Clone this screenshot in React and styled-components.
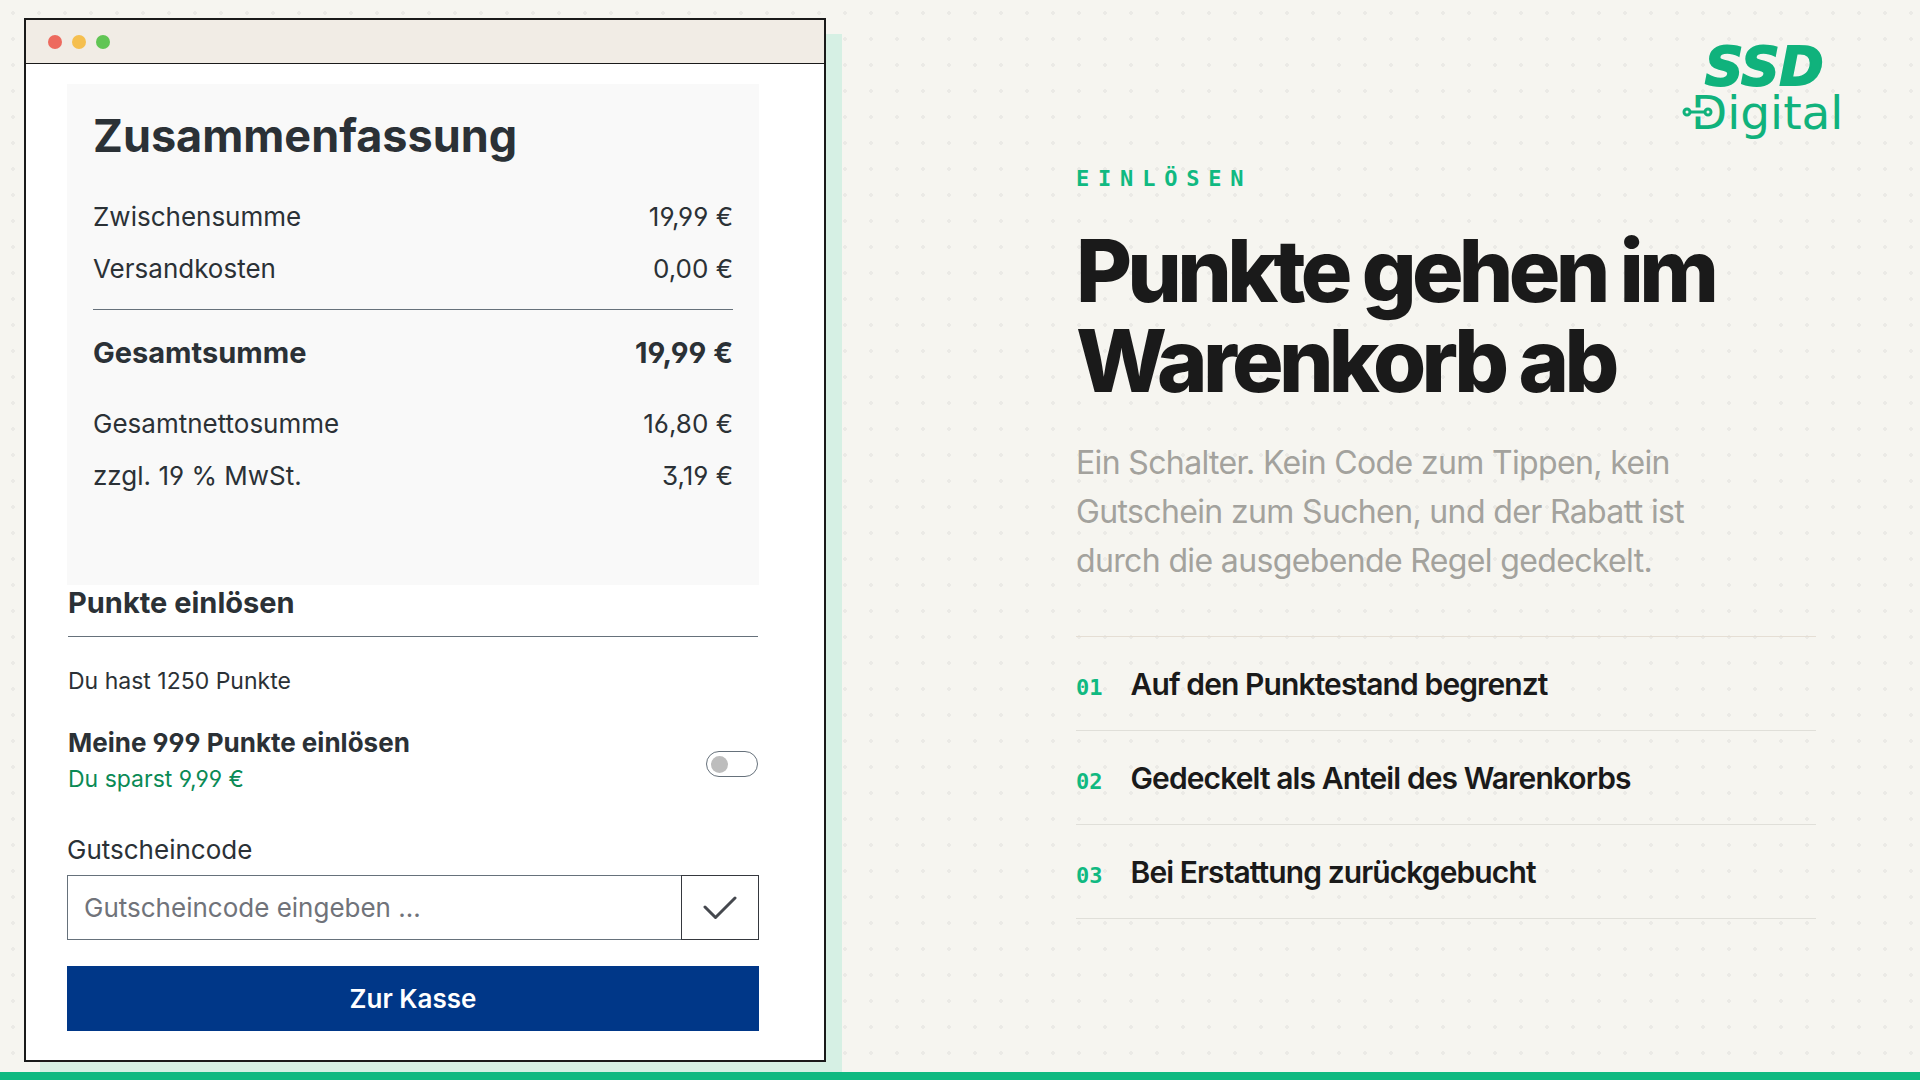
import React, { useState } from 'react';
import styled, { createGlobalStyle } from 'styled-components';


/*CSS*/

const GlobalStyle = createGlobalStyle`
    *, *::before, *::after {
        box-sizing: border-box;
    }

    body {
        margin: 0;
        background-color: #f6f5f0;
        font-family: Inter, "Liberation Sans", sans-serif;
        color: #1a1a1a;
    }

    h1, h2, h3, p, dl, dd, ol {
        margin: 0;
        padding: 0;
    }

    button, input {
        font-family: inherit;
    }
`;

const Page = styled.div`
    min-height: 100vh;
    display: flex;
    flex-direction: column;
    background-image: radial-gradient(circle at 13px 13px, #ebeae6 2px, transparent 2px);
    background-size: 26px 26px;
`;

const Slide = styled.main`
    flex: 1;
    display: grid;
    grid-template-columns: minmax(0, 802fr) minmax(0, 768fr);
    column-gap: 250px;
    align-items: start;
    padding: 18px 76px 10px 24px;
`;

const BottomBar = styled.div`
    position: relative;
    height: 8px;
    background-color: #10b981;
`;

/* Browser window */

const Window = styled.section`
    border: 2px solid #1a1a1a;
    background-color: #fff;
    box-shadow: 16px 16px 0 #d6f0e4;
    color: #2b3136;
    font-feature-settings: "ss01";
`;

const TitleBar = styled.div`
    display: flex;
    align-items: center;
    gap: 10px;
    height: 44px;
    padding: 0 22px;
    border-bottom: 1px solid #1a1a1a;
    background-color: #f1ece5;
`;

const Light = styled.span`
    width: 14px;
    height: 14px;
    border-radius: 50%;
    background-color: ${props => props.$color};
`;

const WindowBody = styled.div`
    display: flex;
    flex-direction: column;
    padding: 20px 65px 29px 41px;
`;

const Summary = styled.div`
    padding: 24px 26px 83px;
    background-color: #f9f9f9;
`;

const SummaryTitle = styled.h2`
    margin-bottom: 27px;
    font-size: 45px;
    line-height: 56px;
    font-weight: 700;
`;

const PriceList = styled.dl`
    display: flex;
    flex-direction: column;
`;

const PriceRow = styled.div`
    display: flex;
    justify-content: space-between;
    font-size: ${props => (props.$total ? "29px" : "26px")};
    font-weight: ${props => (props.$total ? "700" : "400")};
    line-height: 52px;
    white-space: nowrap;
`;

const TotalBlock = styled.div`
    margin: 14px 0 19px;
    padding-top: 17px;
    border-top: 1px solid #66717b;
`;

const Rewards = styled.div`
    padding: 0 1px;
`;

const RewardsTitle = styled.h3`
    padding-bottom: 15px;
    border-bottom: 1px solid #66717b;
    font-size: 29px;
    line-height: 36px;
    font-weight: 700;
`;

const Balance = styled.p`
    margin: 29px 0;
    font-size: 23px;
    line-height: 30px;
`;

const RedeemRow = styled.label`
    display: flex;
    justify-content: space-between;
    align-items: flex-end;
    cursor: pointer;
`;

const RedeemText = styled.span`
    display: flex;
    flex-direction: column;
    line-height: 36px;
`;

const RedeemTitle = styled.strong`
    font-size: 26px;
    font-weight: 700;
`;

const Saving = styled.span`
    font-size: 23px;
    color: #0a8a55;
`;

const Toggle = styled.input`
    appearance: none;
    display: flex;
    align-items: center;
    width: 52px;
    height: 26px;
    margin: 0 0 20px;
    padding: 0 4px;
    border: 1px solid #66717b;
    border-radius: 13px;
    background-color: #fff;
    cursor: pointer;

    &::before {
        content: "";
        width: 17px;
        height: 17px;
        border-radius: 50%;
        background-color: #bdbdbd;
    }

    &:checked {
        justify-content: flex-end;
    }

    &:checked::before {
        background-color: #0a8a55;
    }
`;

const Voucher = styled.form`
    display: flex;
    flex-direction: column;
    gap: 7px;
    margin: 35px 0 26px;
`;

const VoucherLabel = styled.label`
    font-size: 26px;
    line-height: 36px;
`;

const VoucherField = styled.div`
    display: flex;
    height: 65px;
`;

const VoucherInput = styled.input`
    flex: 1;
    min-width: 0;
    padding: 0 16px;
    border: 1px solid #66717b;
    border-right: 0;
    border-radius: 0;
    background-color: #fff;
    font-size: 26px;
    color: #2b3136;

    &::placeholder {
        color: #70737a;
        opacity: 1;
    }
`;

const VoucherSubmit = styled.button`
    display: flex;
    align-items: center;
    justify-content: center;
    width: 78px;
    padding: 0;
    border: 1px solid #35383e;
    background-color: #fff;
    color: #45484e;
    cursor: pointer;
`;

const CheckoutButton = styled.button`
    height: 65px;
    border: 0;
    background-color: #003788;
    color: #fff;
    font-size: 26px;
    font-weight: 600;
    cursor: pointer;
`;

/* Copy on the right */

const Aside = styled.section`
    display: flex;
    flex-direction: column;
    padding-top: 12px;
`;

const LogoLink = styled.a`
    align-self: flex-end;
    display: flex;
    color: #10b27c;
`;

const Copy = styled.div`
    margin-top: 19px;
    padding-right: 28px;
`;

const Eyebrow = styled.p`
    margin-bottom: 33px;
    font-family: "DejaVu Sans Mono", monospace;
    font-size: 22px;
    line-height: 28px;
    font-weight: 700;
    letter-spacing: 0.4em;
    text-transform: uppercase;
    color: #10b981;
`;

const Headline = styled.h1`
    font-size: 86px;
    line-height: 90px;
    font-weight: 800;
    letter-spacing: -0.055em;
`;

const Lead = styled.p`
    max-width: 640px;
    margin: 32px 0 51px;
    font-size: 32px;
    line-height: 49px;
    letter-spacing: -0.02em;
    color: #a3a29d;
`;

const Points = styled.ol`
    list-style: none;
    border-top: 1px solid #e5ded4;
`;

const Point = styled.li`
    display: flex;
    align-items: baseline;
    gap: 28px;
    padding: 29px 0 28px;
    border-bottom: 1px solid #e0dfd9;
    font-size: 30px;
    line-height: 36px;
    font-weight: 600;
    letter-spacing: -0.03em;
`;

const PointNumber = styled.span`
    font-family: "DejaVu Sans Mono", monospace;
    font-size: 22px;
    line-height: 24px;
    font-weight: 700;
    letter-spacing: 0;
    color: #10b981;
`;

const lights = ['#ed6a5e', '#f5bf4f', '#61c554'];

const sums = [
    { label: 'Zwischensumme', value: '19,99 €' },
    { label: 'Versandkosten', value: '0,00 €' },
];

const taxes = [
    { label: 'Gesamtnettosumme', value: '16,80 €' },
    { label: 'zzgl. 19 % MwSt.', value: '3,19 €' },
];

const points = [
    { number: '01', text: 'Auf den Punktestand begrenzt' },
    { number: '02', text: 'Gedeckelt als Anteil des Warenkorbs' },
    { number: '03', text: 'Bei Erstattung zurückgebucht' },
];

const Logo = () => (
    <svg width="162" height="116" viewBox="0 -16 162 116" role="img" aria-label="SSD Digital">
        <text x="23" y="39" fontFamily="DejaVu Sans" fontSize="53" fontWeight="700" fontStyle="italic" fill="currentColor" stroke="currentColor" strokeWidth="2">SSD</text>
        <text x="9" y="83" fontFamily="DejaVu Sans" fontSize="47" fill="currentColor">Digital</text>
        {/* circuit line running through the D */}
        <path d="M10 66H24" stroke="#f6f5f0" strokeWidth="9" />
        <path d="M9 66H23" stroke="currentColor" strokeWidth="3" />
        <circle cx="5" cy="66" r="3" fill="#f6f5f0" stroke="currentColor" strokeWidth="3" />
        <circle cx="26" cy="66" r="3" fill="#f6f5f0" stroke="currentColor" strokeWidth="3" />
    </svg>
);

const PriceEntry = ({ label, value, total }) => (
    <PriceRow $total={total}>
        <dt>{label}</dt>
        <dd>{value}</dd>
    </PriceRow>
);

const Cart = () => {
    const [redeem, setRedeem] = useState(false);
    const [code, setCode] = useState('');

    return (
        <Window>
            <TitleBar>
                {lights.map(color => <Light key={color} $color={color} />)}
            </TitleBar>
            <WindowBody>
                <Summary>
                    <SummaryTitle>Zusammenfassung</SummaryTitle>
                    <PriceList>
                        {sums.map(row => <PriceEntry key={row.label} {...row} />)}
                        <TotalBlock>
                            <PriceEntry label="Gesamtsumme" value="19,99 €" total />
                        </TotalBlock>
                        {taxes.map(row => <PriceEntry key={row.label} {...row} />)}
                    </PriceList>
                </Summary>
                <Rewards>
                    <RewardsTitle>Punkte einlösen</RewardsTitle>
                    <Balance>Du hast 1250 Punkte</Balance>
                    <RedeemRow htmlFor="redeem">
                        <RedeemText>
                            <RedeemTitle>Meine 999 Punkte einlösen</RedeemTitle>
                            <Saving>Du sparst 9,99 €</Saving>
                        </RedeemText>
                        <Toggle
                            id="redeem"
                            type="checkbox"
                            role="switch"
                            checked={redeem}
                            onChange={event => setRedeem(event.target.checked)}
                        />
                    </RedeemRow>
                </Rewards>
                <Voucher onSubmit={event => event.preventDefault()}>
                    <VoucherLabel htmlFor="voucher">Gutscheincode</VoucherLabel>
                    <VoucherField>
                        <VoucherInput
                            id="voucher"
                            type="text"
                            placeholder="Gutscheincode eingeben ..."
                            value={code}
                            onChange={event => setCode(event.target.value)}
                        />
                        <VoucherSubmit type="submit" aria-label="Gutscheincode einlösen">
                            <svg width="34" height="24" viewBox="0 0 34 24" fill="none" stroke="currentColor" strokeWidth="3" strokeLinecap="round" strokeLinejoin="round">
                                <path d="M2 11L12.500 21.500L32 2" />
                            </svg>
                        </VoucherSubmit>
                    </VoucherField>
                </Voucher>
                <CheckoutButton type="button">Zur Kasse</CheckoutButton>
            </WindowBody>
        </Window>
    );
};

export default function App() {
    return (
        <Page>
            <GlobalStyle />
            <Slide>
                <Cart />
                <Aside>
                    <LogoLink href="#"><Logo /></LogoLink>
                    <Copy>
                        <Eyebrow>Einlösen</Eyebrow>
                        <Headline>Punkte gehen im Warenkorb ab</Headline>
                        <Lead>
                            Ein Schalter. Kein Code zum Tippen, kein Gutschein zum Suchen, und der Rabatt ist durch die ausgebende Regel gedeckelt.
                        </Lead>
                        <Points>
                            {points.map(point => (
                                <Point key={point.number}>
                                    <PointNumber>{point.number}</PointNumber>
                                    {point.text}
                                </Point>
                            ))}
                        </Points>
                    </Copy>
                </Aside>
            </Slide>
            <BottomBar />
        </Page>
    );
}
